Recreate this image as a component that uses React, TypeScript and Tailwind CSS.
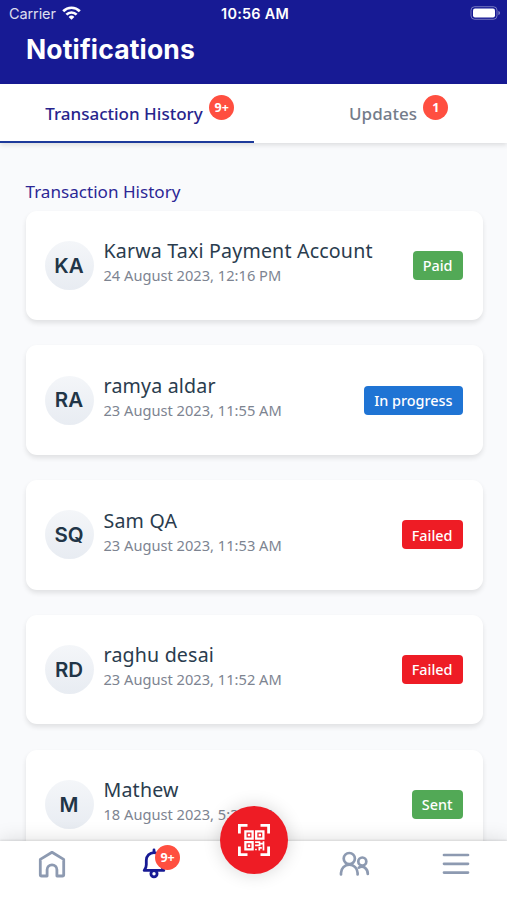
import * as React from "react";
import clsx from "clsx";

type Status = "Paid" | "In progress" | "Failed" | "Sent";

type Transaction = {
  initials: string;
  name: string;
  date: string;
  status: Status;
};

const TRANSACTIONS: Transaction[] = [
  { initials: "KA", name: "Karwa Taxi Payment Account", date: "24 August 2023, 12:16 PM", status: "Paid" },
  { initials: "RA", name: "ramya aldar", date: "23 August 2023, 11:55 AM", status: "In progress" },
  { initials: "SQ", name: "Sam QA", date: "23 August 2023, 11:53 AM", status: "Failed" },
  { initials: "RD", name: "raghu desai", date: "23 August 2023, 11:52 AM", status: "Failed" },
  { initials: "M", name: "Mathew", date: "18 August 2023, 5:32 PM", status: "Sent" },
];

const STATUS_COLORS: Record<Status, string> = {
  Paid: "bg-[#52a956]",
  "In progress": "bg-[#1f74d4]",
  Failed: "bg-[#ee1c25]",
  Sent: "bg-[#52a956]",
};

function Badge({ children, className }: { children: React.ReactNode; className?: string }) {
  return (
    <span
      className={clsx(
        "flex size-[25px] items-center justify-center rounded-full bg-[#ff4f40] pt-[2px] text-[12.5px] leading-none font-bold text-white",
        className
      )}
    >
      {children}
    </span>
  );
}

function StatusBar() {
  return (
    <div className="flex h-[27px] items-center justify-between pr-[6px] pl-[9px] font-['Inter',sans-serif] text-white">
      <div className="flex flex-1 items-center gap-[6px]">
        <span className="text-[14.5px] tracking-[-0.1px] opacity-85">Carrier</span>
        <svg className="-mt-[2px]" width="19" height="14" viewBox="0 0 19 14" fill="none" stroke="currentColor" strokeWidth="2.7">
          <path d="M1.2 5.2a11.7 11.7 0 0 1 16.6 0" />
          <path d="M4.4 8.6a7.2 7.2 0 0 1 10.2 0" />
          <path d="M9.5 13.8 6.6 10.9a4.1 4.1 0 0 1 5.8 0Z" fill="currentColor" stroke="none" />
        </svg>
      </div>
      <span className="text-[14.4px] font-semibold tracking-[0.25px]">10:56 AM</span>
      <div className="flex flex-1 justify-end">
        <svg className="-mt-px" width="31" height="14" viewBox="0 0 31 14" fill="none">
          <rect x="1" y="0.7" width="26" height="12.6" rx="3.6" stroke="white" strokeOpacity="0.4" />
          <rect x="3" y="2.4" width="22" height="9.2" rx="2" fill="white" />
          <path d="M28.4 5v4c1-.4 1.6-1.1 1.6-2s-.6-1.6-1.6-2Z" fill="white" fillOpacity="0.45" />
        </svg>
      </div>
    </div>
  );
}

function TransactionCard({ item }: { item: Transaction }) {
  return (
    <li className="flex h-[109.5px] shrink-0 items-center rounded-[11px] bg-white pr-5 pl-[19px] shadow-[0_3px_5px_rgba(0,0,0,0.1)]">
      <div className="flex size-[49px] shrink-0 items-center justify-center rounded-full bg-linear-to-b from-[#f4f6f9] to-[#e8ecf2] pt-[1.5px] font-['Inter',sans-serif] text-[20.5px] font-semibold text-[#213547]">
        {item.initials}
      </div>
      <div className="ml-[10px] flex-1 pb-[5.5px] whitespace-nowrap">
        <p className="text-[19.6px] leading-[26px] font-[450] tracking-[0.18px] text-[#2a3c4e]">{item.name}</p>
        <p className="text-[14.65px] leading-[23px] text-[#7d8491]">{item.date}</p>
      </div>
      <span
        className={clsx(
          "flex h-[29px] items-center rounded-[4px] px-[10px] pt-px text-[14.4px] font-medium text-white",
          STATUS_COLORS[item.status]
        )}
      >
        {item.status}
      </span>
    </li>
  );
}

function HomeIcon() {
  return (
    <svg width="28" height="28" viewBox="0 0 28 28" fill="none" stroke="currentColor" strokeWidth="2.8" strokeLinecap="round" strokeLinejoin="round">
      <path d="M2.3 9.4 14 2.3l11.7 7.1v15.3a1.3 1.3 0 0 1-1.3 1.3h-5.5v-6.3a4.9 4.9 0 0 0-9.8 0V26H3.6a1.3 1.3 0 0 1-1.3-1.3Z" />
    </svg>
  );
}

function BellIcon() {
  return (
    <svg width="28" height="32" viewBox="0 0 28 32" fill="none" stroke="currentColor" strokeWidth="2.8" strokeLinecap="round" strokeLinejoin="round">
      <path d="M14 2.9v2.5" />
      <path d="M4.2 23.4h19.6c-1.5-1.7-2.1-3.4-2.1-5.7v-4.4a7.7 7.7 0 0 0-15.4 0v4.4c0 2.3-.6 4-2.1 5.7Z" />
      <circle cx="14" cy="26.8" r="3.1" />
    </svg>
  );
}

function PeopleIcon() {
  return (
    <svg width="32" height="28" viewBox="0 0 32 28" fill="none" stroke="currentColor" strokeWidth="2.7" strokeLinecap="round">
      <circle cx="11.3" cy="8.6" r="5.6" />
      <path d="M3 24.5V23a8.3 8.3 0 0 1 16.6 0v1.5" />
      <circle cx="24.3" cy="11.5" r="4" />
      <path d="M20.8 17.6c4.7-2.6 9 1.2 9 6.4" />
    </svg>
  );
}

function MenuIcon() {
  return (
    <svg width="28" height="22" viewBox="0 0 28 22" fill="none" stroke="currentColor" strokeWidth="2.7" strokeLinecap="round">
      <path d="M2 2h24M2 10.8h24M2 19.6h24" />
    </svg>
  );
}

function QrIcon() {
  return (
    <svg width="34" height="34" viewBox="0 0 34 34" fill="none" stroke="currentColor">
      <path strokeWidth="2.8" d="M2.4 10.5V2.4h8.1M23.5 2.4h8.1v8.1M31.6 23.5v8.1h-8.1M10.5 31.6H2.4v-8.1" />
      <path strokeWidth="2.3" d="M8.4 8.4h7.2v7.2H8.4ZM19.2 8.4h7.2v7.2h-7.2ZM8.4 19.2h7.2v7.2H8.4Z" />
      <path fill="currentColor" stroke="none" d="M10.8 10.8h2.4v2.4h-2.4ZM21.6 10.8h2.4v2.4h-2.4ZM10.8 21.6h2.4v2.4h-2.4Z" />
      <path strokeWidth="1.7" d="M18.1 19.2h5.2M26.5 18.3v9.2M18.1 22.4h4.5v-1.8h4M18.1 26.5h1.7M22.3 27.5v-2.6h2.5" />
    </svg>
  );
}

export default function App() {
  const [tab, setTab] = React.useState<"history" | "updates">("history");

  const tabClass = (active: boolean) =>
    clsx(
      "flex w-1/2 items-start justify-center gap-[6.5px] border-b-[2.5px] pt-[11px] text-[17px] font-medium whitespace-nowrap",
      active ? "border-[#1d3a9b] text-[#27248c]" : "border-transparent text-[#747c8a]"
    );

  return (
    <div className="relative flex h-[900px] w-[507px] flex-col overflow-hidden bg-[#f9fafc] font-['Noto_Sans',sans-serif]">
      <header className="h-[83.5px] shrink-0 bg-[#171a94]">
        <StatusBar />
        <h1 className="pl-[26px] font-['Inter',sans-serif] text-[26.5px] leading-[44px] font-bold tracking-[0.15px] text-white">
          Notifications
        </h1>
      </header>

      <nav className="z-10 flex h-[59.5px] shrink-0 bg-white shadow-[0_2px_5px_rgba(0,0,0,0.12)]">
        <button className={clsx(tabClass(tab === "history"), "pl-[26px]")} onClick={() => setTab("history")}>
          <span className="pt-[6px]">Transaction History</span>
          <Badge>9+</Badge>
        </button>
        <button className={clsx(tabClass(tab === "updates"), "pl-[37px]")} onClick={() => setTab("updates")}>
          <span className="pt-[6px]">Updates</span>
          <Badge>1</Badge>
        </button>
      </nav>

      <main className="flex min-h-0 flex-1 flex-col overflow-hidden pt-[36px] pr-[24.5px] pl-[25.5px]">
        <h2 className="h-[31.5px] shrink-0 text-[17.1px] leading-[26px] text-[#2c2795]">Transaction History</h2>
        <ul className="flex flex-col gap-[25.3px]">
          {TRANSACTIONS.map((item) => (
            <TransactionCard key={item.initials} item={item} />
          ))}
        </ul>
      </main>

      <footer className="relative flex h-[59.5px] shrink-0 items-start bg-white text-[#8d9ab1] shadow-[0_-1px_20px_rgba(0,0,0,0.13),0_-1px_2px_rgba(0,0,0,0.1)]">
        <div className="flex w-1/5 justify-center pt-[9px] pl-[2.5px]">
          <HomeIcon />
        </div>
        <div className="flex w-1/5 justify-center pt-[6px] pl-[4px] text-[#171a94]">
          <div className="relative">
            <BellIcon />
            <Badge className="absolute -top-[2px] left-[15px]">9+</Badge>
          </div>
        </div>
        <div className="flex w-1/5 justify-center pl-px">
          <button className="-mt-[34.5px] flex size-[68px] items-center justify-center rounded-full bg-[#ee1c25] text-white shadow-[0_0_18px_rgba(0,0,0,0.16)]">
            <QrIcon />
          </button>
        </div>
        <div className="flex w-1/5 justify-center pt-[9px] pr-[2px]">
          <PeopleIcon />
        </div>
        <div className="flex w-1/5 justify-center pt-[12px]">
          <MenuIcon />
        </div>
      </footer>
    </div>
  );
}
